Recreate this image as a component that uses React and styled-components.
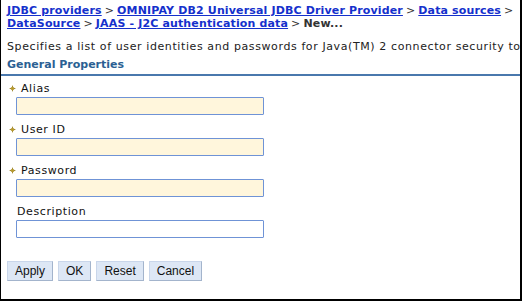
import React from "react";
import styled, { createGlobalStyle } from "styled-components";

const GlobalStyle = createGlobalStyle`
  html, body {
    margin: 0;
    padding: 0;
    background: #ffffff;
  }
  body {
    font-family: "DejaVu Sans", Verdana, sans-serif;
  }
`;

const Frame = styled.div`
  box-sizing: border-box;
  width: 522px;
  height: 301px;
  border-left: 1px solid #000;
  border-right: 2px solid #000;
  border-bottom: 2px solid #000;
  overflow: hidden;
  background: #fff;
`;

const Crumbs = styled.div`
  padding: 4px 0 0 6px;
  font-size: 11px;
  font-weight: bold;
  line-height: 13px;
  letter-spacing: 0.15px;
  color: #333;
  white-space: nowrap;
`;

const Crumb = styled.a`
  color: #1530cc;
  text-decoration: underline;
`;

const Sep = styled.span`
  font-weight: normal;
  color: #333;
  margin: 0 3px;
`;

const Intro = styled.div`
  padding: 10px 0 0 6px;
  font-size: 11px;
  line-height: 13px;
  letter-spacing: 0.6px;
  color: #222;
  white-space: nowrap;
`;

const SectionTitle = styled.div`
  margin-top: 5px;
  padding: 0 0 3px 6px;
  font-size: 11px;
  font-weight: bold;
  line-height: 13px;
  color: #2b5f93;
  border-bottom: 2px solid #4a78ad;
`;

const Form = styled.div`
  display: flex;
  flex-direction: column;
  gap: 8px;
  padding: 6px 0 0 15px;
`;

const Field = styled.div`
  display: flex;
  flex-direction: column;
`;

const Label = styled.label`
  display: flex;
  align-items: center;
  gap: 5px;
  margin-left: ${(p) => (p.$required ? "-7px" : "1px")};
  font-size: 11px;
  line-height: 13px;
  letter-spacing: 0.6px;
  color: #111;
  margin-bottom: 2px;
`;

const Input = styled.input`
  box-sizing: border-box;
  width: 248px;
  height: 18px;
  margin: 0;
  border: 1px solid #6f93d6;
  border-radius: 1px;
  background: ${(p) => (p.$required ? "#fff6dc" : "#ffffff")};
  outline: none;
`;

const Buttons = styled.div`
  display: flex;
  gap: 5px;
  padding: 23px 0 0 6px;
`;

const Button = styled.button`
  box-sizing: border-box;
  height: 20px;
  padding: 0 7px;
  font-family: "Liberation Sans", Arial, sans-serif;
  font-size: 12px;
  color: #111;
  background: #dde7f5;
  border: 1px solid #a3b4cc;
  border-top-color: #c9d6ea;
  border-left-color: #c9d6ea;
  border-radius: 0;
`;

const Star = () => (
  <svg width="7" height="7" viewBox="0 0 7 7">
    <path d="M3.5 0 L4.3 2.5 L7 3.5 L4.3 4.5 L3.5 7 L2.7 4.5 L0 3.5 L2.7 2.5 Z" fill="#9c8426" />
    <circle cx="3.5" cy="3.5" r="1.6" fill="#b89a30" />
  </svg>
);

const fields = [
  { label: "Alias", required: true },
  { label: "User ID", required: true },
  { label: "Password", required: true },
  { label: "Description", required: false },
];

export default function App() {
  return (
    <>
      <GlobalStyle />
      <Frame>
        <Crumbs>
          <Crumb>JDBC providers</Crumb>
          <Sep>&gt;</Sep>
          <Crumb>OMNIPAY DB2 Universal JDBC Driver Provider</Crumb>
          <Sep>&gt;</Sep>
          <Crumb>Data sources</Crumb>
          <Sep>&gt;</Sep>
          <br />
          <Crumb>DataSource</Crumb>
          <Sep>&gt;</Sep>
          <Crumb>JAAS - J2C authentication data</Crumb>
          <Sep>&gt;</Sep>
          New...
        </Crumbs>
        <Intro>
          Specifies a list of user identities and passwords for Java(TM) 2 connector security to
        </Intro>
        <SectionTitle>General Properties</SectionTitle>
        <Form>
          {fields.map((f) => (
            <Field key={f.label}>
              <Label $required={f.required}>
                {f.required && <Star />}
                {f.label}
              </Label>
              <Input $required={f.required} type={f.label === "Password" ? "password" : "text"} />
            </Field>
          ))}
        </Form>
        <Buttons>
          <Button>Apply</Button>
          <Button>OK</Button>
          <Button>Reset</Button>
          <Button>Cancel</Button>
        </Buttons>
      </Frame>
    </>
  );
}
